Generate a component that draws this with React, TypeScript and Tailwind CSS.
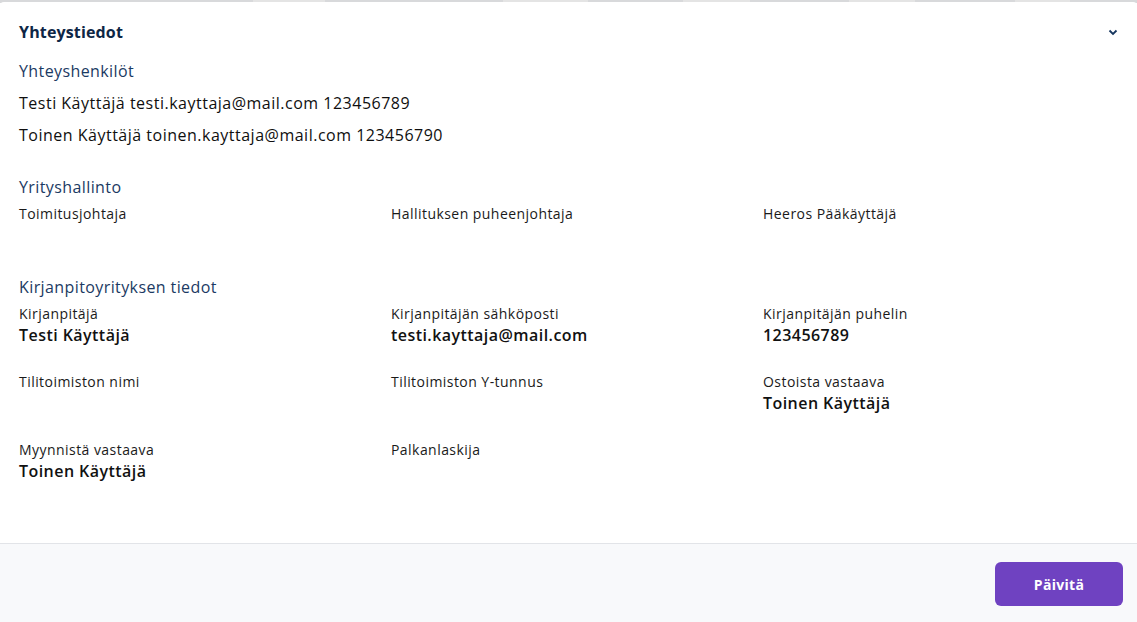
import React from "react";

const F = { fontFamily: '"Open Sans", "Liberation Sans", sans-serif' };

function Field({ label, value }: { label: string; value?: string }) {
  return (
    <div className="flex flex-col min-h-[45px]">
      <div className="text-[14px] tracking-[0.45px] leading-[21px] text-[#1a1a1a]">{label}</div>
      {value && <div className="text-[16px] tracking-[0.45px] leading-[23px] font-semibold text-[#111]">{value}</div>}
    </div>
  );
}

export default function App() {
  const segs = [
    ["#d8d9db", 253], ["#e4e4e4", 72], ["#d8d9db", 178], ["#e4e4e4", 85], ["#d8d9db", 95],
    ["#e4e4e4", 67], ["#d8d9db", 99], ["#e4e4e4", 66], ["#d8d9db", 100], ["#e4e4e4", 55], ["#d8d9db", 67],
  ] as const;
  return (
    <div style={F} className="w-[1137px] h-[622px] bg-white overflow-hidden flex flex-col">
      <div className="flex h-[3px] shrink-0">
        {segs.map(([c, w], i) => (
          <div key={i} className="h-full" style={{ background: c, width: w }} />
        ))}
      </div>
      <div className="flex-1 flex flex-col bg-white rounded-t-[4px] -mt-px">
        <div className="flex items-center justify-between pl-[19px] pr-[18px] pt-[18px]">
          <div className="text-[16px] tracking-[0.15px] font-bold text-[#0d2645] leading-[24px]">Yhteystiedot</div>
          <svg width="10" height="7" viewBox="0 0 10 7" className="mr-[1px]">
            <path d="M1.5 1.5 L5 5 L8.5 1.5" stroke="#16365f" strokeWidth="1.8" fill="none" />
          </svg>
        </div>
        <div className="px-[19px] pt-[15px] flex-1">
          <div className="text-[16px] tracking-[0.4px] text-[#1b3a63] leading-[24px]">Yhteyshenkilöt</div>
          <div className="mt-[8px] text-[16px] tracking-[0.5px] text-[#0f0f0f] leading-[24px]">Testi Käyttäjä testi.kayttaja@mail.com 123456789</div>
          <div className="mt-[8px] text-[16px] tracking-[0.5px] text-[#0f0f0f] leading-[24px]">Toinen Käyttäjä toinen.kayttaja@mail.com 123456790</div>

          <div className="mt-[28px] text-[16px] tracking-[0.4px] text-[#1b3a63] leading-[24px]">Yrityshallinto</div>
          <div className="mt-[4px] grid grid-cols-3 gap-x-[17px]">
            <Field label="Toimitusjohtaja" />
            <Field label="Hallituksen puheenjohtaja" />
            <Field label="Heeros Pääkäyttäjä" />
          </div>

          <div className="mt-[27px] text-[16px] tracking-[0.4px] text-[#1b3a63] leading-[24px]">Kirjanpitoyrityksen tiedot</div>
          <div className="mt-[4px] grid grid-cols-3 gap-x-[17px] gap-y-[23px]">
            <Field label="Kirjanpitäjä" value="Testi Käyttäjä" />
            <Field label="Kirjanpitäjän sähköposti" value="testi.kayttaja@mail.com" />
            <Field label="Kirjanpitäjän puhelin" value="123456789" />
            <Field label="Tilitoimiston nimi" />
            <Field label="Tilitoimiston Y-tunnus" />
            <Field label="Ostoista vastaava" value="Toinen Käyttäjä" />
            <Field label="Myynnistä vastaava" value="Toinen Käyttäjä" />
            <Field label="Palkanlaskija" />
          </div>
        </div>
        <div className="h-[79px] shrink-0 border-t border-[#e2e4e8] bg-[#f8f9fb] flex items-start justify-end pr-[14px] pt-[18px]">
          <button className="w-[128px] h-[44px] rounded-[6px] bg-[#6f42c1] text-white text-[14px] tracking-[0.3px] font-bold">Päivitä</button>
        </div>
      </div>
    </div>
  );
}
